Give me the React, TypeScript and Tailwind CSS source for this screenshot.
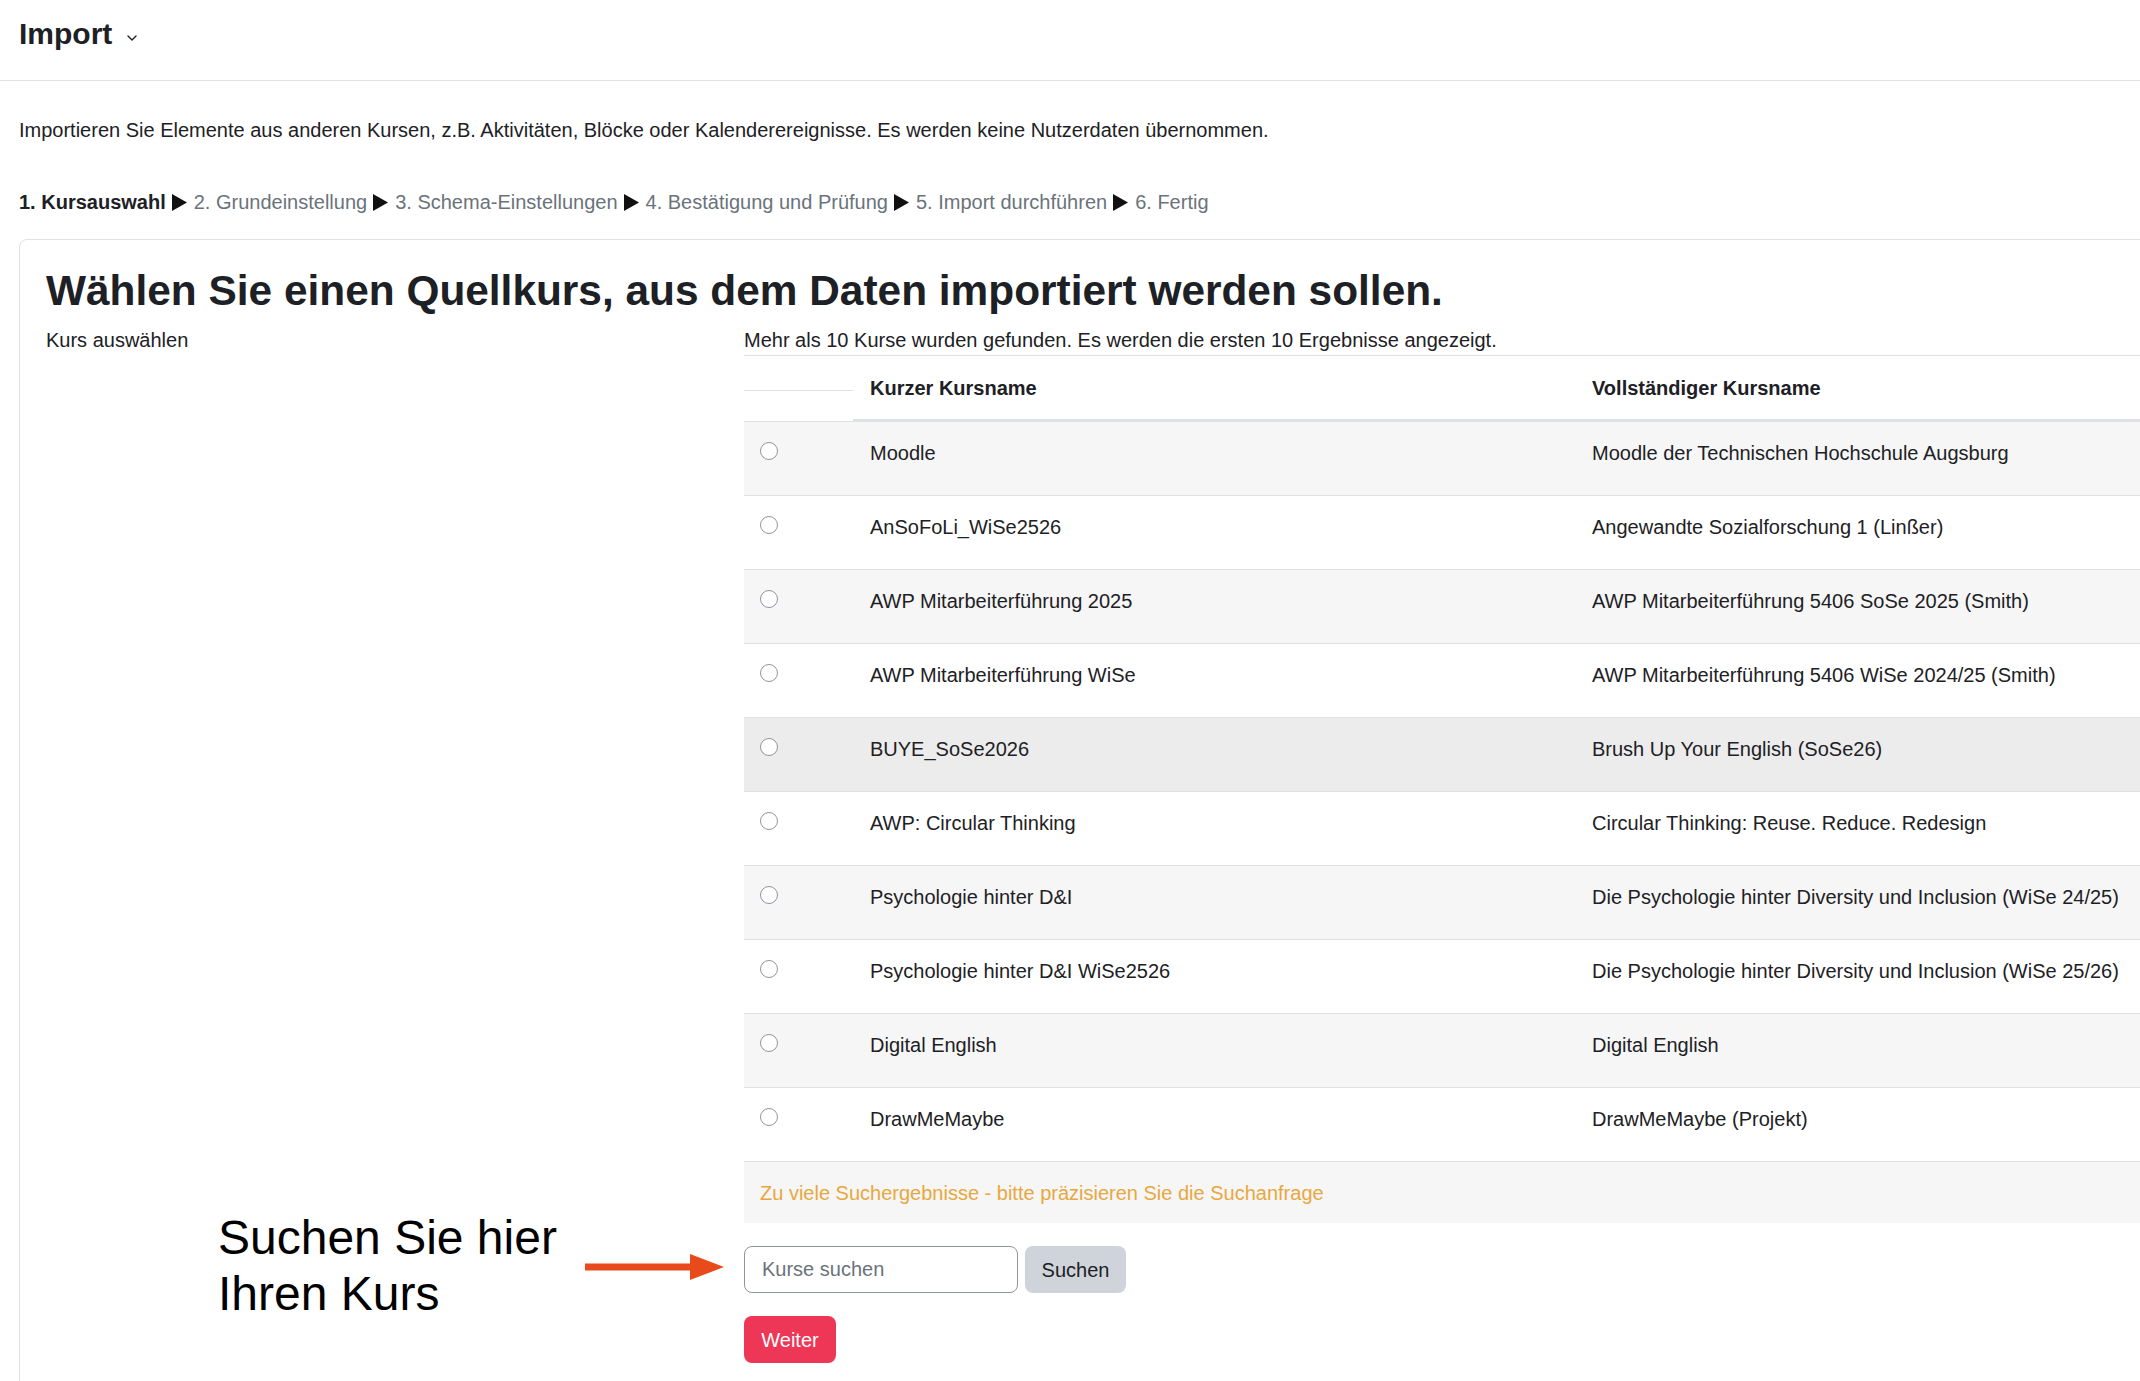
import React from 'react';

const courses = [
  { short: 'Moodle', full: 'Moodle der Technischen Hochschule Augsburg' },
  { short: 'AnSoFoLi_WiSe2526', full: 'Angewandte Sozialforschung 1 (Linßer)' },
  { short: 'AWP Mitarbeiterführung 2025', full: 'AWP Mitarbeiterführung 5406 SoSe 2025 (Smith)' },
  { short: 'AWP Mitarbeiterführung WiSe', full: 'AWP Mitarbeiterführung 5406 WiSe 2024/25 (Smith)' },
  { short: 'BUYE_SoSe2026', full: 'Brush Up Your English (SoSe26)' },
  { short: 'AWP: Circular Thinking', full: 'Circular Thinking: Reuse. Reduce. Redesign' },
  { short: 'Psychologie hinter D&I', full: 'Die Psychologie hinter Diversity und Inclusion (WiSe 24/25)' },
  { short: 'Psychologie hinter D&I WiSe2526', full: 'Die Psychologie hinter Diversity und Inclusion (WiSe 25/26)' },
  { short: 'Digital English', full: 'Digital English' },
  { short: 'DrawMeMaybe', full: 'DrawMeMaybe (Projekt)' },
];

const steps = ['2. Grundeinstellung', '3. Schema-Einstellungen', '4. Bestätigung und Prüfung', '5. Import durchführen', '6. Fertig'];

function StepArrow() {
  return (
    <svg width="15" height="17" viewBox="0 0 15 17" className="ml-[6px] mr-[7px] inline-block">
      <polygon points="0,0 15,8.5 0,17" fill="#111" />
    </svg>
  );
}

function Radio() {
  return <span className="block h-[18px] w-[18px] rounded-full border border-[#8f959e] bg-white" />;
}

export default function App() {
  return (
    <div className="relative min-h-[1381px] w-[2140px] overflow-hidden bg-white font-['Liberation_Sans',Arial,sans-serif] text-[20px] leading-[30px] text-[#1d2125]">
      <header className="h-[81px] border-b border-[#dee2e6] pl-[19px] pt-[16px]">
        <div className="flex items-center">
          <h1 className="text-[30px] font-bold leading-[36px]">Import</h1>
          <svg width="12" height="8" viewBox="0 0 12 8" className="ml-[14px] mt-[7px]">
            <path d="M2 2 L6 6 L10 2" fill="none" stroke="#1d2125" strokeWidth="1.4" strokeLinecap="round" strokeLinejoin="round" />
          </svg>
        </div>
      </header>

      <main className="pl-[19px]">
        <p className="mt-[34px]">
          Importieren Sie Elemente aus anderen Kursen, z.B. Aktivitäten, Blöcke oder Kalenderereignisse. Es werden keine Nutzerdaten übernommen.
        </p>

        <nav className="mt-[42px] flex items-center whitespace-nowrap">
          <span className="font-bold">1. Kursauswahl</span>
          {steps.map((s) => (
            <span key={s} className="flex items-center">
              <StepArrow />
              <span className="text-[#6a737b]">{s}</span>
            </span>
          ))}
        </nav>

        <section className="mt-[22px] w-[2240px] rounded-[8px] border border-[#dee2e6] pl-[26px] pt-[26px] pb-[40px]">
          <h2 className="text-[42.4px] font-bold leading-[50px] text-[#1d2125]">
            Wählen Sie einen Quellkurs, aus dem Daten importiert werden sollen.
          </h2>

          <div className="mt-[9px] grid grid-cols-[698px_1fr]">
            <div>Kurs auswählen</div>
            <div>
              <p>Mehr als 10 Kurse wurden gefunden. Es werden die ersten 10 Ergebnisse angezeigt.</p>

              <div className="border-t border-[#dee2e6]">
                <div className="grid h-[65px] grid-cols-[109px_722px_1fr] items-start">
                  <div className="h-[35px] border-b border-[#dee2e6]" />
                  <div className="h-[65px] border-b-2 border-[#dee2e6] pl-[17px] pt-[17px] font-bold">Kurzer Kursname</div>
                  <div className="h-[65px] border-b-2 border-[#dee2e6] pl-[17px] pt-[17px] font-bold">Vollständiger Kursname</div>
                </div>

                {courses.map((c, i) => (
                  <div
                    key={c.short}
                    className={
                      'grid h-[74px] grid-cols-[109px_722px_1fr] border-t border-[#dee2e6] pt-[16px] ' +
                      (i === 4 ? 'bg-[#ececec]' : i % 2 === 0 ? 'bg-[#f6f6f6]' : 'bg-white')
                    }
                  >
                    <div className="pl-[16px] pt-[4px]">
                      <Radio />
                    </div>
                    <div className="pl-[17px]">{c.short}</div>
                    <div className="pl-[17px]">{c.full}</div>
                  </div>
                ))}

                <div className="h-[62px] border-t border-[#dee2e6] bg-[#f6f6f6] pl-[16px] pt-[16px] text-[#e8a83f]">
                  Zu viele Suchergebnisse - bitte präzisieren Sie die Suchanfrage
                </div>
              </div>

              <div className="mt-[23px] flex gap-[7px]">
                <input
                  type="text"
                  placeholder="Kurse suchen"
                  className="h-[47px] w-[274px] rounded-[8px] border border-[#8f959e] px-[17px] text-[20px] text-[#1d2125] placeholder:text-[#6a737b] outline-none"
                />
                <button type="button" className="h-[47px] w-[101px] rounded-[8px] bg-[#ced4da] text-[20px] text-[#1d2125]">
                  Suchen
                </button>
              </div>

              <button type="button" className="mt-[23px] h-[47px] w-[92px] rounded-[8px] bg-[#ee3656] text-[20px] text-white">
                Weiter
              </button>
            </div>
          </div>
        </section>
      </main>

      <div className="absolute left-[218px] top-[1210px] text-[48px] leading-[56px] text-black">
        Suchen Sie hier
        <br />
        Ihren Kurs
      </div>
      <svg className="absolute left-[585px] top-[1252px]" width="140" height="30" viewBox="0 0 140 30">
        <rect x="0" y="11.5" width="108" height="7" fill="#e84a1b" />
        <polygon points="105,2 139,15 105,28" fill="#e84a1b" />
      </svg>
    </div>
  );
}
